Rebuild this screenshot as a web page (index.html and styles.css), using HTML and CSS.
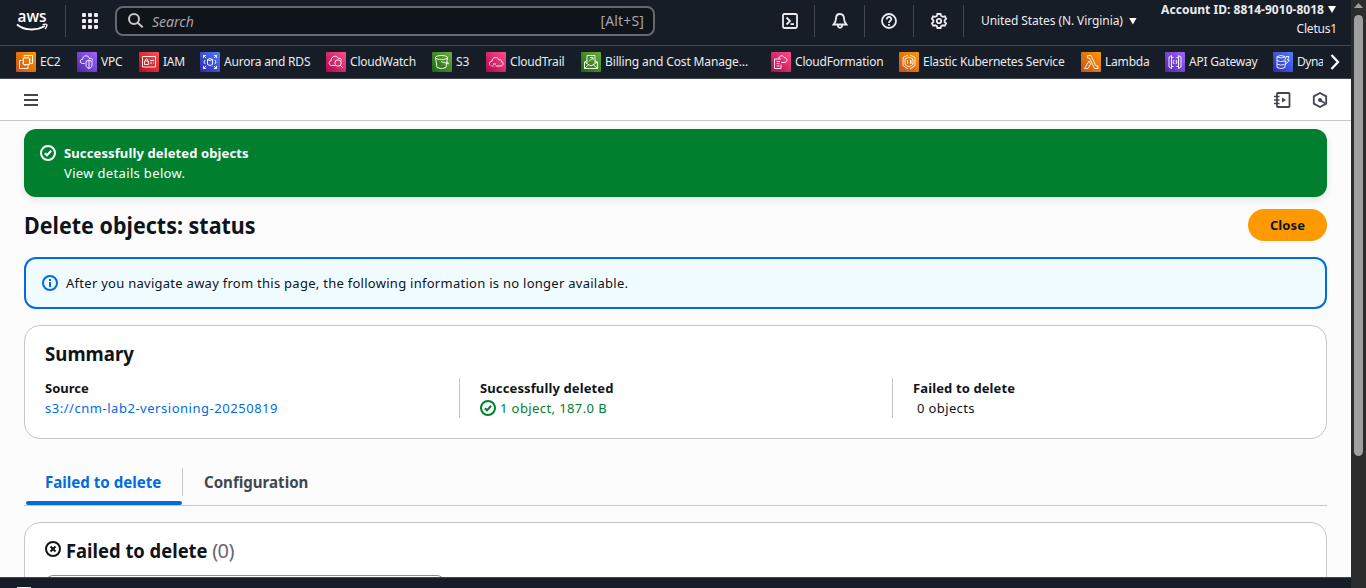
FILE: index.html
```html
<!DOCTYPE html>
<html lang="en">
<head>
<meta charset="utf-8">
<title>Delete objects: status</title>
<link rel="stylesheet" href="styles.css">
</head>
<body>
<div class="window">
<div class="page">
  <header class="topbar">
    <div class="logo"><svg width="34" height="26" viewBox="0 0 34 26"><text class="logo-text" x="1.500" y="15" textLength="29" lengthAdjust="spacingAndGlyphs">aws</text><path d="M1 17.500C8 23.500 20 24 29 19" fill="none" stroke="#fff" stroke-width="2"/><path d="M26.500 17.700c2.400-.7 4-.6 4.400.1.300.9-.6 2.700-1.800 4.300" fill="none" stroke="#fff" stroke-width="1.300"/></svg></div>
    <div class="apps"><svg width="16" height="16" fill="#ebebf0"><rect width="4" height="4" rx="1"/><rect x="6" width="4" height="4" rx="1"/><rect x="12" width="4" height="4" rx="1"/><rect y="6" width="4" height="4" rx="1"/><rect x="6" y="6" width="4" height="4" rx="1"/><rect x="12" y="6" width="4" height="4" rx="1"/><rect y="12" width="4" height="4" rx="1"/><rect x="6" y="12" width="4" height="4" rx="1"/><rect x="12" y="12" width="4" height="4" rx="1"/></svg></div>
    <div class="search"><svg width="16" height="16" fill="none" stroke="#c6c6cd" stroke-width="2"><circle cx="6" cy="6" r="5"/><path d="M9.700 9.700l5 4.500"/></svg><span class="placeholder">Search</span><span class="shortcut">[Alt+S]</span></div>
    <div class="tools">
      <div class="tool"><svg class="line" viewBox="0 0 16 16"><rect x="1" y="1" width="14" height="14" rx="1.500"/><path d="M4.500 4.500L8 8l-3.500 3.500M8.500 11.200H12"/></svg></div>
      <div class="tool"><svg class="line" viewBox="0 0 16 16"><path d="M8 1C5 1 4 3 4 5.500 4 8.500 3 9.500 1.500 11.500h13C13 9.500 12 8.500 12 5.500 12 3 11 1 8 1zM6 12v1.500q2 2.500 4 0V12"/></svg></div>
      <div class="tool narrow"><svg class="line" viewBox="0 0 16 16"><circle cx="8" cy="8" r="7"/><path d="M5.700 6.500C5.700 3 10.500 3.400 10.300 6.200 10.200 7.800 8 7.700 8 10M8 11v1.800"/></svg></div>
      <div class="tool"><svg class="line" viewBox="0 0 16 16"><path d="M6.400 1h3.200l.5 2 1.800.9 2-.6 1.200 2.500-1.500 1.500v1.500l1.500 1.500-1.300 2.500-2-.5-1.700.9-.5 1.800H6.400l-.5-1.800-1.700-.9-2 .5L.9 10.300l1.500-1.500V7.300L.9 5.800l1.300-2.500 2 .6L5.900 3z"/><circle cx="8" cy="8" r="2.200"/></svg></div>
    </div>
    <div class="region"><span class="t-region">United States (N. Virginia)</span><i class="caret"></i></div>
    <div class="account"><div class="acct-id"><b>Account ID: 8814-9010-8018</b><i class="caret"></i></div><div class="t-user">Cletus1</div></div>
  </header>

  <nav class="favorites">
    <div class="favs">
    <a class="fav w-ec2"><svg class="svc orange" viewBox="0 0 20 20"><path d="M7.500 6h6v6.500h-6zM8 4.500V3.500h8.500v8h-2M5.500 8.500H3.500v8h8.500v-2.500M9 4.500v1.500m3-1.500v1.500M9 12.500V14m3-1.500V14M6 8h1.500M6 11h1.500m6-3H15m-1.500 3H15"/></svg><span>EC2</span></a>
    <a class="fav w-vpc"><svg class="svc purple" viewBox="0 0 20 20"><path d="M7.500 11.500H5.500C2 11 3 7 5.500 7.500 6 2.500 11.500 3 12.500 6.500c2-.5 3 .5 3 2"/><path d="M9 9.500L12 8l3 1.500V13c0 2-1.500 3-3 3.500-1.500-.5-3-1.500-3-3.500zM12 8v8"/></svg><span>VPC</span></a>
    <a class="fav w-iam"><svg class="svc red" viewBox="0 0 20 20"><path d="M3.500 4.500h13v10.500h-13zM5.500 9h4v3.500h-4zM6.500 9V7.500q1-1.500 2 0V9M11 8.500h4M11 11h2M14 11h1"/></svg><span>IAM</span></a>
    <a class="fav w-rds"><svg class="svc blue" viewBox="0 0 20 20"><path d="M3.500 6V3.500H6M3.500 3.500l2.500 2.500m8-2.500h2.500V6m0-2.500L14 6M3.500 14v2.500H6m-2.500 0L6 14m8 2.500h2.500V14m0 2.500L14 14M7.500 7.500v5q2.500 2 5 0v-5q-2.500-2-5 0 2.500 2 5 0M5 8q-2 2 0 4M15 8q2 2 0 4"/></svg><span>Aurora and RDS</span></a>
    <a class="fav w-cw"><svg class="svc pink" viewBox="0 0 20 20"><path d="M9 13.500H5.500C2 13 3 8.500 5 9 5 3.500 11 3 12.500 6.500 15 5.500 15.500 7.500 15.500 8.500"/><circle cx="12" cy="11" r="3.200"/><path d="M14.300 13.300l2.500 2.500"/></svg><span>CloudWatch</span></a>
    <a class="fav w-s3"><svg class="svc green" viewBox="0 0 20 20"><ellipse cx="9.500" cy="5.500" rx="6" ry="2"/><path d="M3.500 5.500l1.500 10q4.500 2.500 9 0l1.500-10M9 9.500l7.500 2.500-1.300-2.500"/></svg><span>S3</span></a>
    <a class="fav w-ct"><svg class="svc pink" viewBox="0 0 20 20"><path d="M4 13.500C2.500 11 4.500 9 6 9.500 6 4.500 12 4.500 13 8c2-1 3 1 2.500 2 2.500 0 2 4-.5 4H9.500M5.500 14h2M7 12h3"/></svg><span>CloudTrail</span></a>
    <a class="fav w-bill"><svg class="svc green" viewBox="0 0 20 20"><path d="M6 8.500L3.500 10v6.500h13V10L14 8.500M3.500 10l6.500 4 6.500-4M3.500 16.500l4.500-4m8.500 4l-4.500-4M6 11V3.500h8V11M8 9.500l3.500-3.500M9 5.500h3V8"/></svg><span class="t-bill">Billing and Cost Manage…</span></a>
    <a class="fav w-cf"><svg class="svc pink" viewBox="0 0 20 20"><path d="M10 7H3.500v9.500h6.500V12.500M5.500 9.500H9m-3.500 2.200h3M5.500 14h3M8 6.500C8 3 12.500 3 13 5.500c3.500 0 4.500 5 0 5h-3"/></svg><span>CloudFormation</span></a>
    <a class="fav w-eks"><svg class="svc orange" viewBox="0 0 20 20"><path d="M9 3L4 5.500v8L9 17m2-14l5 2.500v8L11 17M10 5l4 2v5.500L10 15l-4-2.500V7zM8.500 8v4m3-4v4m0-2l2-2m-2 2l2 2"/></svg><span>Elastic Kubernetes Service</span></a>
    <a class="fav w-lam"><svg class="svc orange" viewBox="0 0 20 20"><path d="M6.500 3.500H10l5 10.500h2v2.500h-3.500L8.500 6h-2zM8 9L3.500 16.500H7L9.500 12z"/></svg><span>Lambda</span></a>
    <a class="fav w-api"><svg class="svc purple" viewBox="0 0 20 20"><path d="M6.500 3.500L4 5v10l2.500 1.500zM13.500 3.500L16 5v10l-2.500 1.500zM6.500 5.500h2M6.500 14.500h2M11.500 5.500h2m-2 9h2M9 8l-1 2 1 2m2-4l1 2-1 2"/></svg><span>API Gateway</span></a>
    <a class="fav w-dyn"><svg class="svc blue" viewBox="0 0 20 20"><path d="M4 4.500q4-2 8 0M4 4.500v11q4 2 8 0v-2.500M4 5q4 2 8 0M4 8.500q4 2 7 .5M4 12q4 2 7 .5M13 4.500h3L14.500 8h2L12 13l1-3.500h-1.500z"/></svg><span>Dyna</span></a>
    </div>
    <svg class="next" width="12" height="18"><path d="M2.500 2l6.500 7-6.500 7" fill="none" stroke="#fff" stroke-width="2.300"/></svg>
  </nav>

  <div class="toolbar"><svg width="14" height="13" fill="#424650"><path d="M0 0h14v2H0zM0 5h14v2H0zM0 10h14v2H0z"/></svg>
    <div class="toolbar-end">
      <svg width="17" height="16" fill="none" stroke="#424650" stroke-width="1.800"><rect x="3" y="1" width="12.500" height="14" rx=".8"/><path d="M0 4.500h5.500M0 8h5.500M0 11.500h5.500" stroke-width="1.500"/><path d="M8 5.500v5L12 8z" fill="#424650" stroke="none"/></svg>
      <svg width="16" height="16" fill="none" stroke="#424650" stroke-width="1.800"><path d="M8 1l6.200 3.400v7.200L8 15l-6.200-3.400V4.400z"/><circle cx="8" cy="8" r="1.100" fill="#424650"/><path d="M8.500 8.500L13 11.200"/></svg>
    </div>
  </div>

  <main class="content">
    <section class="flash"><svg class="st" viewBox="0 0 16 16"><circle cx="8" cy="8" r="7"/><path d="M4.800 8.200l2.200 2.100 4.200-4.500"/></svg><div><b class="t-flash">Successfully deleted objects</b><p class="t-view">View details below.</p></div></section>
    <div class="title"><h1><span class="t-h1">Delete objects: status</span></h1><button>Close</button></div>
    <section class="info"><svg class="st" viewBox="0 0 16 16"><circle cx="8" cy="8" r="7"/><path d="M8 7v5M8 4v2"/></svg><span class="t-info">After you navigate away from this page, the following information is no longer available.</span></section>
    <section class="card summary"><h2><span class="t-sum">Summary</span></h2>
      <div class="cols">
        <div class="col"><b>Source</b><a class="t-src">s3://cnm-lab2-versioning-20250819</a></div>
        <div class="col"><b class="t-flash">Successfully deleted</b><span class="ok"><svg class="st" viewBox="0 0 16 16"><circle cx="8" cy="8" r="7"/><path d="M4.800 8.200l2.200 2.100 4.200-4.500"/></svg><span>1 object, 187.0 B</span></span></div>
        <div class="col"><b class="t-flash">Failed to delete</b><span class="zero">0 objects</span></div>
      </div>
    </section>
    <div class="tabs"><div class="tab active"><span class="t-tab">Failed to delete</span></div><div class="tab"><span class="t-tab">Configuration</span></div></div>
    <section class="card failed"><h2><svg class="st" viewBox="0 0 16 16"><circle cx="8" cy="8" r="7"/><path d="M5.500 5.500l5 5m0-5l-5 5"/></svg><span class="t-fail">Failed to delete</span><span class="count">(0)</span></h2><div class="filter"></div></section>
  </main>
  <footer class="bottom"><i></i></footer>
</div>
<div class="scroll"><i class="up"></i><i class="thumb"></i></div>
</div>
</body>
</html>
```
FILE: styles.css
```css
* { box-sizing: border-box; }
body { margin: 0; font: 13px/20px "Noto Sans", sans-serif; color: #0f141a; }
h1, h2, p { margin: 0; }
svg { flex: none; display: block; }
.window { display: flex; width: 1366px; height: 588px; overflow: hidden; }
.page { display: flex; flex-direction: column; width: 1351px; height: 588px; background: #fcfcfd; }
.topbar { display: flex; height: 46px; flex: none; background: #161d26; border-bottom: 1px solid #424650; color: #ebebf0; }
.logo { width: 66px; height: 32px; margin-top: 5px; padding: 2px 0 0 16px; border-right: 1px solid #424650; }
.logo svg { overflow: visible; }
.logo-text { font: 600 16px "Open Sans", sans-serif; fill: #fff; }
.apps { width: 49px; padding: 13px 0 0 16px; }
.search { display: flex; align-items: center; width: 540px; height: 30px; margin-top: 6px; padding: 0 9px 0 11px; border: 2px solid #656871; border-radius: 8px; background: #0f141a; color: #a4a4ad; }
.placeholder { margin-left: 8px; padding-top: 1px; font-style: italic; font-size: 14px; }
.shortcut { margin-left: auto; font-size: 14px; letter-spacing: .15px; }
.tools { display: flex; margin: 5px 0 0 110px; height: 32px; }
.tool { display: flex; align-items: center; justify-content: center; width: 50px; border-right: 1px solid #424650; }
.narrow { width: 49px; }
.line { width: 16px; height: 16px; fill: none; stroke: #ebebf0; stroke-width: 1.8; }
.region { display: flex; align-items: center; width: 173px; margin-left: 17px; height: 42px; font-size: 12px; }
.t-region { letter-spacing: -.08px; }
.caret { flex: none; width: 8px; height: 7px; margin-left: 6px; background: #fff; clip-path: polygon(0 0, 100% 0, 50% 100%); }
.account { flex: 1; padding-right: 14px; font-size: 12px; text-align: right; line-height: 19px; white-space: nowrap; }
.acct-id { display: flex; align-items: center; justify-content: flex-end; padding-right: 1px; letter-spacing: .03px; }
.acct-id .caret { margin-left: 4px; }
.t-user { letter-spacing: -.2px; }
.favorites { display: flex; align-items: center; height: 33px; flex: none; background: #161d26; border-bottom: 1px solid #424650; color: #ebebf0; font-size: 12px; letter-spacing: -.2px; }
.favs { display: flex; width: 1323px; padding-left: 16px; overflow: hidden; }
.fav { display: flex; align-items: center; gap: 4px; flex: none; white-space: nowrap; }
.w-ec2 { width: 61px; }
.w-vpc { width: 62px; }
.w-iam { width: 61px; }
.w-rds { width: 126px; }
.w-cw { width: 106px; }
.w-s3 { width: 54px; }
.w-ct { width: 95px; }
.w-bill { width: 190px; }
.w-cf { width: 128px; }
.w-eks { width: 182px; }
.w-lam { width: 84px; }
.w-api { width: 108px; }
.w-dyn { letter-spacing: -.5px; }
.t-bill { letter-spacing: -.13px; }
.svc { width: 20px; height: 20px; border-radius: 1px; fill: none; stroke: #fff; stroke-width: .9; }
.orange { background: linear-gradient(45deg, #c8511b, #f90); }
.purple { background: linear-gradient(45deg, #4d27a8, #a166ff); }
.red { background: linear-gradient(45deg, #bd0816, #ff5252); }
.blue { background: linear-gradient(45deg, #2e27ad, #527fff); }
.pink { background: linear-gradient(45deg, #b0084d, #ff4f8b); }
.green { background: linear-gradient(45deg, #1b660f, #6cae3e); }
.next { margin-left: 6px; }
.toolbar { display: flex; align-items: center; height: 42px; flex: none; padding: 1px 23px 0 24px; background: #fff; border-bottom: 1px solid #c6c6cd; }
.toolbar-end { display: flex; gap: 21px; margin-left: auto; }
.content { flex: 1; min-height: 0; padding: 8px 24px 0; overflow: hidden; }
.st { width: 16px; height: 16px; fill: none; stroke: currentColor; stroke-width: 2; }
.flash { display: flex; gap: 8px; height: 68px; padding: 14px 16px; border-radius: 12px; background: #00802f; color: #fff; box-shadow: 0 3px 8px #00000018; }
.flash .st { margin-top: 2px; }
.flash b { display: block; }
.t-flash { letter-spacing: .12px; }
.t-view { letter-spacing: .34px; }
.title { display: flex; justify-content: space-between; align-items: center; height: 60px; padding-bottom: 4px; }
h1 { font-size: 24px; line-height: 30px; padding-bottom: 1px; }
.t-h1, .t-sum, .t-tab, .t-fail { display: inline-block; transform-origin: 0 50%; white-space: nowrap; }
.t-h1 { transform: scaleX(.895); }
.t-sum { transform: scaleX(.933); }
.t-tab { transform: scaleX(.943); }
.t-fail { transform: scaleX(.918); margin-right: -13px; }
button { width: 79px; height: 32px; border: 0; border-radius: 16px; background: #f90; color: #0f141a; font: bold 13px "Noto Sans", sans-serif; letter-spacing: .1px; }
.info { display: flex; align-items: center; gap: 8px; height: 52px; padding: 0 16px; border: 2px solid #006ce0; border-radius: 12px; background: #f0fbff; }
.info .st { color: #006ce0; }
.t-info { letter-spacing: .27px; }
.card { border: 1px solid #c6c6cd; border-radius: 16px; background: #fff; padding: 0 20px; }
.summary { height: 114px; margin-top: 16px; padding-top: 16px; }
h2 { font-size: 20px; line-height: 24px; }
.cols { display: flex; margin-top: 12px; }
.col { display: flex; flex: none; flex-direction: column; width: 433px; height: 40px; }
.col:first-child { width: 414px; }
.col + .col { border-left: 1px solid #c6c6cd; padding-left: 20px; }
.col a { color: #006ce0; }
.t-src { letter-spacing: .53px; }
.ok { display: flex; align-items: center; gap: 4px; color: #00802f; letter-spacing: .4px; }
.zero { padding-left: 4px; letter-spacing: .37px; }
.tabs { display: flex; height: 38px; margin-top: 29px; border-bottom: 1px solid #c6c6cd; font-size: 16px; font-weight: bold; color: #424650; }
.tab { height: 28px; padding: 4px 21px; }
.active { width: 159px; border-right: 1px solid #c6c6cd; color: #006ce0; }
.active::after { content: ""; display: block; width: 156px; height: 4px; margin: 9px 0 0 -19px; border-radius: 2px; background: #006ce0; }
.active .t-tab { display: block; width: 130px; }
.failed { height: 110px; margin-top: 16px; padding-top: 16px; }
.failed h2 { display: flex; align-items: center; gap: 5px; }
.failed .st { margin-top: -5px; }
.count { font-weight: normal; color: #656871; letter-spacing: -.6px; }
.filter { width: 400px; height: 32px; margin-top: 12px; border: 1px solid #8c8c94; border-radius: 8px; }
.bottom { height: 11px; flex: none; padding: 9px 0 0 17px; background: #161d26; border-top: 1px solid #424650; }
.bottom i { display: block; width: 14px; height: 1px; background: #ebebf0; }
.scroll { display: flex; flex-direction: column; align-items: center; width: 15px; background: #2c2c2c; }
.up { width: 9px; height: 5px; margin-top: 3px; background: #9f9f9f; clip-path: polygon(50% 0, 100% 100%, 0 100%); }
.thumb { width: 9px; height: 441px; margin-top: 7px; border-radius: 5px; background: #9f9f9f; }
```
